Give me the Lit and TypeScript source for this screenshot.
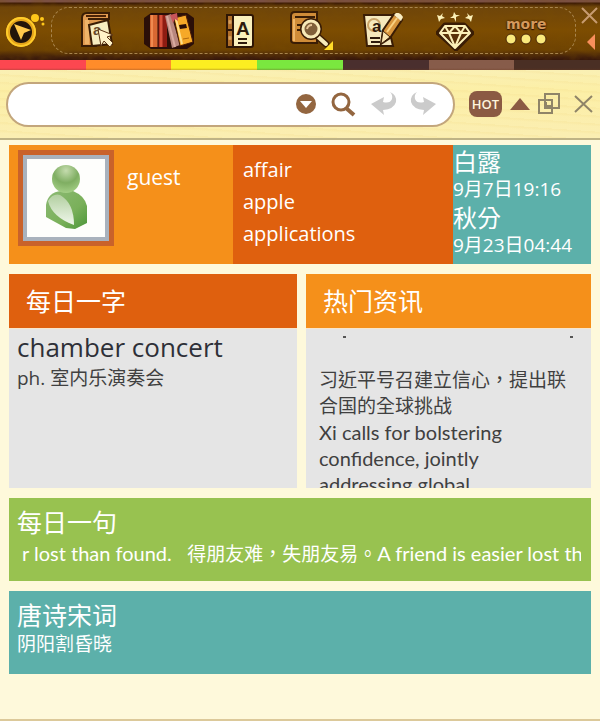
import { LitElement, html, css, svg } from "lit";
import { customElement } from "lit/decorators.js";

const stripColors = ["#fc4750", "#ff8c2a", "#fcee21", "#7ae73f", "#4a2f2e", "#875c4a", "#4a2f24"];

const bookIcon = svg`
  <path d="M3 6q0-5 5-5h22v6H9q5 0 19 0v10L17 34H3z" fill="#e09a50" stroke="#3a1d05" stroke-width="2"/>
  <path d="M7 4h20" stroke="#4a2206" stroke-width="2"/>
  <path d="M8 8v24" stroke="#f0b469" stroke-width="4"/>
  <path d="M10 13l19-5 4 24-20 2z" fill="#f7edc0" stroke="#3a1d05" stroke-width="2"/>
  <text class="glyph" x="14" y="23" font-size="15" fill="#6a4a2a">a</text>
  <path d="M19 17l15 6-6 2 6 6-3 4-6-6-3 5z" fill="#fff3c8" stroke="#5a3212" stroke-width="1"/>`;

const shelfIcon = svg`
  <path d="M8 1h36l7 5v26l-7 5H8l-7-5V6z" fill="#2b0f08"/>
  <path d="M7 3h8v32H7z" fill="#d96832"/><path d="M15 3h9v32h-9z" fill="#8e1c12"/>
  <path d="M9 3v32" stroke="#f08a50" stroke-width="2"/>
  <path d="M18 3v32" stroke="#d5503a" stroke-width="3"/>
  <path d="M15 3v32" stroke="#2b0f08" stroke-width="1"/>
  <path d="M22 4l6-2 9 31-8 3z" fill="#b8877e"/>
  <path d="M24 4l8 31" stroke="#d8aaa0" stroke-width="2"/>
  <path d="M31 6l12-3 7 27-13 4z" fill="#f6a928" stroke="#4a1c04" stroke-width="1"/>
  <path d="M33 7l6 25" stroke="#ffe08a" stroke-width="2"/>
  <path d="M27 3l7-2 1 8-3-2-2 4z" fill="#c8555a"/>
  <path d="M36 13l7-1 1 4-7 1z" fill="#2b0f08"/><path d="M40 27l6-1" stroke="#b36a10"/>`;

const addressIcon = svg`
  <path d="M1 2h6v32H1z" fill="#b0702c" stroke="#2e1605" stroke-width="2"/>
  <path d="M7 2h18q2 0 2 2v28q0 2-2 2H7z" fill="#faf0bc" stroke="#2e1605" stroke-width="2"/>
  <path d="M0 9h7M0 17h7M0 25h7" stroke="#2e1605" stroke-width="2"/>
  <circle cx="4" cy="9" r="2" fill="#d8a15c"/><circle cx="4" cy="25" r="2" fill="#d8a15c"/>
  <text class="glyph" x="10" y="22" font-size="19" fill="#2e1a0c">A</text>
  <path d="M12 26h9M12 30h9" stroke="#2e1a0c" stroke-width="2"/>`;

const lookupIcon = svg`
  <path d="M2 5q0-4 4-4h22v31H6q-4 0-4-3z" fill="#d08c38" stroke="#3a1d05" stroke-width="2"/>
  <path d="M6 6h20" stroke="#3a1d05" stroke-width="2"/><path d="M5 8v22" stroke="#eeb568" stroke-width="2"/>
  <path d="M8 14h6M8 19h4" stroke="#3a1d05" stroke-width="2"/>
  <path d="M28 25l9 8" stroke="#3a1d05" stroke-width="7" stroke-linecap="round"/>
  <path d="M28 25l9 8" stroke="#f7eab8" stroke-width="4" stroke-linecap="round"/>
  <circle cx="22" cy="18" r="8" fill="#7d5b3a" stroke="#3a1d05" stroke-width="6"/>
  <circle cx="22" cy="18" r="8" fill="#80603a" stroke="#f7eab8" stroke-width="3"/>
  <path d="M18 18q1-4 5-4" fill="none" stroke="#e8c89a" stroke-width="2"/>
  <path d="M44 30v9h-9z" fill="#ffdb28"/>`;

const noteIcon = svg`
  <path d="M2 2h30l-4 18 3 13H5z" fill="#f5e8bc" stroke="#3a1d05" stroke-width="2"/>
  <circle cx="12" cy="12" r="6" fill="none" stroke="#cba468" stroke-width="2"/>
  <text class="glyph" x="10" y="19" font-size="17" fill="#2e1a0c">a</text>
  <path d="M8 25h10M9 29h9" stroke="#2e1a0c" stroke-width="2"/>
  <path d="M21 17L32 1l8 6-12 18-9 6z" fill="#d8953c" stroke="#3a1d05" stroke-width="2"/>
  <path d="M25 19L35 5" stroke="#f9d080" stroke-width="2"/>
  <path d="M21 18l7 6-9 7z" fill="#f9e5b0" stroke="#3a1d05"/>
  <path d="M32 2l7 6 2-4q-3-5-7-4z" fill="#f9edc4"/>`;

const gemIcon = svg`
  <path d="M9 14h19l8 8-16 16L2 22z" fill="#5a3208" stroke="#3a1d05" stroke-width="5" stroke-linejoin="round"/>
  <path d="M9 15h20l5 7-15 15L4 22zM4 22h30M13 22l6 14 6-14M9 15l4 7 6-7 6 7 4-7" fill="none" stroke="#fbf0b8" stroke-width="2" stroke-linejoin="round"/>
  <path d="M1 4l3 1 3-3-1 3 3 2-4 1-2 3-1-4zM18 1l2 3h4l-4 2v5l-2-4-4 0 3-2zM37 4l-3 1-3-3 1 3-3 2 4 1 2 3 1-4z" fill="#fbf0b8"/>`;

const tools = [
  { label: "Dictionary", w: 38, h: 38, art: bookIcon },
  { label: "Bookshelf", w: 52, h: 38, art: shelfIcon },
  { label: "Word book", w: 30, h: 36, art: addressIcon },
  { label: "Look up", w: 46, h: 40, art: lookupIcon },
  { label: "Notes", w: 42, h: 36, art: noteIcon },
  { label: "Membership", w: 38, h: 40, art: gemIcon },
];

@customElement("top-bar")
class TopBar extends LitElement {
  static styles = css`
    :host { display: block; }
    .bar {
      position: relative;
      display: grid;
      grid-template-columns: 51px minmax(0, 1fr) 24px;
      height: 60px;
      background: linear-gradient(#7b5043 0 2px, #3c1a04 3px, #6e450b 7px, #7d4d02 30px, #6e4303 50px, #42200b 57px, #35150b);
    }
    .grain { position: absolute; inset: 0; width: 100%; height: 100%; opacity: 0.2; pointer-events: none; }
    .bar > :not(.grain) { position: relative; }
    button { display: flex; align-items: center; justify-content: center; padding: 0; border: 0; background: none; }
    nav {
      display: grid;
      grid-template-columns: repeat(7, minmax(0, 1fr));
      margin: 7px 0 6px;
      padding: 0 13px 0 10px;
      border: 1px dashed #a8854e;
      border-radius: 18px;
    }
    .glyph { font-family: "Liberation Sans", sans-serif; font-weight: 700; }
    .more {
      flex-direction: column;
      gap: 2px;
      font: 700 14px/14px "DejaVu Sans", sans-serif;
      color: #d59a5c;
      text-shadow: 0 0 2px #2c1204, 0 1px 1px #2c1204;
    }
    .ends { display: flex; flex-direction: column; align-items: center; justify-content: space-between; padding: 6px 0 10px; }
    .strip { display: grid; grid-template-columns: repeat(7, 1fr); height: 10px; }
    .c { background: linear-gradient(transparent 80%, #6b3a2055), var(--tone); }
  `;
  render() {
    return html`
      <header class="bar">
        <svg class="grain" aria-hidden="true">
          <filter id="leather"><feTurbulence type="fractalNoise" baseFrequency="0.09 0.16" numOctaves="3" seed="4"/>
            <feColorMatrix values="0 0 0 0 .2  0 0 0 0 .08  0 0 0 0 0  2.5 0 0 0 -.9"/></filter>
          <rect width="100%" height="100%" filter="url(#leather)"/>
        </svg>
        <button aria-label="Menu">
          <svg width="42" height="42" viewBox="0 0 42 42">
            <circle cx="16" cy="23" r="13" fill="#23150a" stroke="#e4a31c" stroke-width="4"/>
            <circle cx="16" cy="23" r="14" fill="none" stroke="#ffcc2a" stroke-width="2"/>
            <path d="M9 15l17 6-7 3-3 7z" fill="#ffc94c"/>
            <circle cx="30" cy="9" r="4" fill="#ffc81a"/><circle cx="37" cy="10" r="2" fill="#ffc81a"/><circle cx="38" cy="15" r="1.5" fill="#ffc81a"/>
          </svg>
        </button>
        <nav aria-label="Tools">
          ${tools.map((t) => html`<button aria-label=${t.label}>
            <svg width=${t.w} height=${t.h} viewBox="0 0 ${t.w} ${t.h}">${t.art}</svg></button>`)}
          <button class="more">more
            <svg width="42" height="12" viewBox="0 0 42 12" fill="#f9e97c" stroke="#4a2606" stroke-width="1">
              <circle cx="6" cy="6" r="5"/><circle cx="21" cy="6" r="5"/><circle cx="36" cy="6" r="5"/>
            </svg>
          </button>
        </nav>
        <div class="ends">
          <button aria-label="Close toolbar"><svg width="20" height="20" viewBox="0 0 20 20"><path d="M4 2l15 15M19 2L4 17" stroke="#c79b70" stroke-width="2"/></svg></button>
          <button aria-label="Collapse"><svg width="20" height="17" viewBox="0 0 20 17"><path d="M17 1v16L9 9z" fill="#f98f5c"/></svg></button>
        </div>
      </header>
      <div class="strip">${stripColors.map((c) => html`<div class="c" style="--tone:${c}"></div>`)}</div>`;
  }
}

@customElement("search-bar")
class SearchBar extends LitElement {
  static styles = css`
    :host { display: block; }
    form {
      display: flex;
      align-items: center;
      height: 68px;
      padding: 0 6px;
      background: repeating-linear-gradient(4deg, #fbeea600 0 5px, #f5df9044 7px 8px), linear-gradient(#faf0b4, #fcefa6 30%, #fbeeb2);
      border-bottom: 2px solid #bfb385;
    }
    .pill {
      display: flex;
      flex: 1;
      align-items: center;
      box-sizing: border-box;
      height: 45px;
      padding: 0 16px 0 20px;
      gap: 11px;
      background: #fff;
      border: 2px solid #c3a67c;
      border-radius: 23px;
    }
    input { flex: 1; min-width: 0; height: 30px; padding: 0; border: 0; outline: 0; background: none; font: 20px "Open Sans", sans-serif; }
    button { display: flex; padding: 0; border: 0; background: none; }
    .side { display: flex; align-items: center; gap: 8px; margin-left: 14px; }
    .hot {
      align-items: center;
      justify-content: center;
      width: 33px;
      height: 26px;
      border-radius: 8px;
      background: #8b5a43;
      color: #fff3dc;
      font: 600 13px "Open Sans", sans-serif;
    }
  `;
  render() {
    return html`
      <form role="search" @submit=${(e: Event) => e.preventDefault()}>
        <div class="pill">
          <input type="text" aria-label="Search words" />
          <button type="button" aria-label="History"><svg width="20" height="20" viewBox="0 0 20 20"><circle cx="10" cy="10" r="10" fill="#936640"/><path d="M4 7h12l-6 7z" fill="#fff"/></svg></button>
          <button aria-label="Search"><svg width="32" height="26" viewBox="0 0 32 26" fill="none" stroke="#936640"><circle cx="14" cy="11" r="8" stroke-width="3"/><path d="M19 17l8 7" stroke-width="4"/></svg></button>
          <button type="button" aria-label="Back"><svg width="28" height="26" viewBox="0 0 28 26"><path d="M1 13L14 6l-1 5q7 2 9-3 1-4-2-7 7 3 6 10-2 7-13 8l1 5z" fill="#cbcbcb"/></svg></button>
          <button type="button" aria-label="Forward"><svg width="28" height="26" viewBox="0 0 28 26"><path d="M27 13L14 6l1 5q-7 2-9-3-1-4 2-7-7 3-6 10 2 7 13 8l-1 5z" fill="#cbcbcb"/></svg></button>
        </div>
        <div class="side">
          <button type="button" class="hot">HOT</button>
          <button type="button" aria-label="Fold"><svg width="20" height="14" viewBox="0 0 20 14"><path d="M10 1l10 12H0z" fill="#8b5a43"/></svg></button>
          <button type="button" aria-label="Mini window"><svg width="22" height="22" viewBox="0 0 22 22" fill="none" stroke="#8f8468" stroke-width="2"><path d="M7 1h14v14H7zM1 7h13v13H1z"/><path d="M8 9v4h5" stroke-width="2"/></svg></button>
          <button type="button" aria-label="Close"><svg width="26" height="22" viewBox="0 0 26 22"><path d="M7 3l17 16M24 3L7 19" stroke="#8f8468" stroke-width="2"/></svg></button>
        </div>
      </form>`;
  }
}

@customElement("app-root")
class AppRoot extends LitElement {
  static styles = css`
    :host {
      display: flex;
      flex-direction: column;
      box-sizing: border-box;
      min-height: 100vh;
      border-bottom: 2px solid #dcc99a;
      background: #fef9db;
      font: 20px/26px "Open Sans", "Noto Sans CJK TC", sans-serif;
      color: #fff;
    }
    main { display: grid; grid-template-columns: minmax(0, 1fr); gap: 10px; padding: 5px 9px; }
    h2, h3, p, ul, dl, dd { margin: 0; padding: 0; font-weight: 400; }
    h2 { font-size: 25px; line-height: 32px; }
    .top { display: grid; grid-template-columns: minmax(0, 224fr) minmax(0, 220fr) minmax(0, 138fr); height: 119px; }
    .user { display: flex; gap: 13px; padding: 5px 9px; background: #f5901a; }
    .avatar { box-sizing: border-box; width: 96px; height: 96px; border: 5px solid #c9622a; }
    .avatar svg { display: block; box-sizing: border-box; width: 86px; height: 86px; border: 4px solid #a9b2bd; background: #fefefc; }
    .name { padding-top: 14px; font-size: 21px; }
    .words { padding: 9px 10px; background: #df600e; list-style: none; line-height: 32px; font-size: 20px; }
    a { color: inherit; text-decoration: none; }
    .terms { background: #5cb0aa; white-space: nowrap; font-size: 19px; }
    .terms dt { font-size: 24px; line-height: 30px; padding-top: 2px; }
    .terms dd { line-height: 24px; }
    .pair { display: grid; grid-template-columns: minmax(0, 288fr) minmax(0, 285fr); gap: 9px; }
    .card { display: flex; flex-direction: column; height: 214px; background: #e5e5e5; color: #404040; }
    .card h2 { padding: 11px 17px; background: #df600e; color: #fff; border-bottom: 1px solid #f8e6cc; }
    .card .news { background: #f5901a; }
    .word { padding: 2px 8px; font-size: 19px; }
    .word h3 { font-size: 26px; line-height: 32px; color: #2e3038; }
    .word p { line-height: 30px; }
    .feed { flex: 1; min-height: 0; overflow: hidden; padding: 0 18px 0 13px; font: 20px/26px Lato, "Noto Sans CJK TC", sans-serif; }
    .zh { font-size: 19px; }
    .past { display: flex; justify-content: space-between; box-sizing: border-box; height: 38px; padding: 7px 0 0 24px; }
    .past i { width: 3px; height: 2px; background: #555; }
    .wide { box-sizing: border-box; height: 83px; padding: 8px 10px 0 8px; }
    .saying { background: #98c250; }
    .poem { background: #5cb0aa; font-size: 19px; }
    .ticker { overflow: hidden; padding-left: 5px; white-space: pre; font: 20px/30px Lato, "Noto Sans CJK TC", sans-serif; }
  `;
  render() {
    return html`
      <top-bar></top-bar>
      <search-bar></search-bar>
      <main>
        <section class="top">
          <div class="user">
            <div class="avatar">
              <svg viewBox="0 0 78 78" role="img" aria-label="Avatar">
                <defs>
                  <radialGradient id="head" cx=".5" cy=".2" r=".8"><stop offset="0" stop-color="#c5dcae"/><stop offset=".55" stop-color="#7fae62"/><stop offset="1" stop-color="#a4cf86"/></radialGradient>
                  <linearGradient id="torso" x1="0" x2="1" y2="1"><stop offset="0" stop-color="#8cba74"/><stop offset=".6" stop-color="#7ab05a"/><stop offset="1" stop-color="#4c963a"/></linearGradient>
                  <linearGradient id="shine" x1="0" x2="0" y2="1"><stop offset="0" stop-color="#b2cfa0"/><stop offset="1" stop-color="#f0f7ec"/></linearGradient>
                </defs>
                <path d="M19 46q2-13 15-14h12q12 5 14 15v17l-12 6-9-1L19 58z" fill="url(#torso)"/>
                <path d="M21 42q5-8 12-6 14 8 14 30Q25 58 21 42z" fill="url(#shine)"/>
                <circle cx="39" cy="20" r="14" fill="url(#head)"/>
              </svg>
            </div>
            <p class="name">guest</p>
          </div>
          <ul class="words">
            <li><a href="#affair">affair</a></li>
            <li><a href="#apple">apple</a></li>
            <li><a href="#applications">applications</a></li>
          </ul>
          <dl class="terms">
            <dt>白露</dt><dd>9月7日19:16</dd>
            <dt>秋分</dt><dd>9月23日04:44</dd>
          </dl>
        </section>
        <div class="pair">
          <section class="card">
            <h2>每日一字</h2>
            <div class="word"><h3>chamber concert</h3><p>ph. 室内乐演奏会</p></div>
          </section>
          <section class="card">
            <h2 class="news">热门资讯</h2>
            <div class="feed">
              <div class="past" aria-hidden="true"><i></i><i></i></div>
              <p class="zh">习近平号召建立信心，提出联合国的全球挑战</p>
              <p>Xi calls for bolstering confidence, jointly addressing global</p>
            </div>
          </section>
        </div>
        <section class="wide saying">
          <h2>每日一句</h2>
          <p class="ticker">r lost than found.   <span class="zh">得朋友难，失朋友易。</span>A friend is easier lost than found.</p>
        </section>
        <section class="wide poem">
          <h2>唐诗宋词</h2>
          <p>阴阳割昏晓</p>
        </section>
      </main>`;
  }
}
